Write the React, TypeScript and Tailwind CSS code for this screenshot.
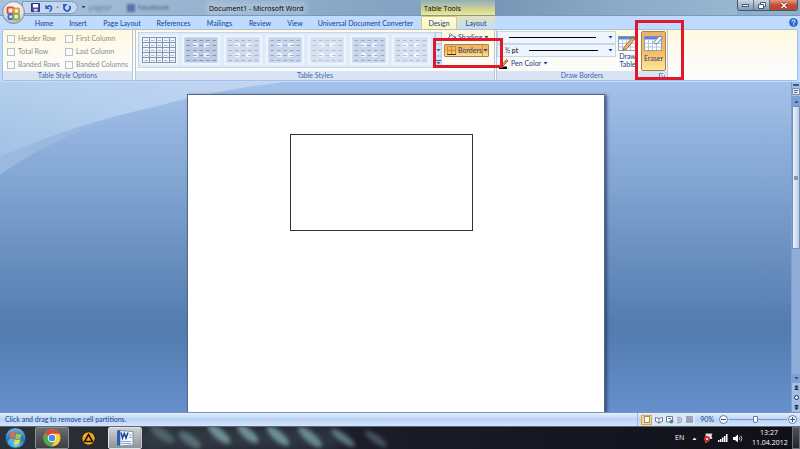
import { useState } from 'react';
import type { ReactNode } from 'react';

const TABS = [
    { name: 'Home', width: 'w-[34px]' },
    { name: 'Insert', width: 'w-[34px]' },
    { name: 'Page Layout', width: 'w-[54px]' },
    { name: 'References', width: 'w-[49px]' },
    { name: 'Mailings', width: 'w-[43px]' },
    { name: 'Review', width: 'w-[38px]' },
    { name: 'View', width: 'w-[32px]' },
    { name: 'Universal Document Converter', width: 'w-[109px]' },
];

const STYLE_OPTIONS = [
    'Header Row', 'First Column',
    'Total Row', 'Last Column',
    'Banded Rows', 'Banded Columns',
];

const THUMBS = [
    { name: 'Table Grid', line: '#8093b0', fill: '#f0f5fb', grid: true },
    { name: 'Light Shading', line: '#8091b0', fill: '#bccae3', grid: false },
    { name: 'Light List', line: '#a2b1ca', fill: '#d0dcee', grid: false },
    { name: 'Light Grid', line: '#94a5c1', fill: '#c8d5ea', grid: false },
    { name: 'Medium Shading', line: '#b0bed4', fill: '#d5e0f0', grid: false },
    { name: 'Medium List', line: '#94a5c1', fill: '#c8d5ea', grid: false },
    { name: 'Medium Grid', line: '#a9b8d0', fill: '#d5e0f0', grid: false },
];

function Caret({ up = false, className = '' }: { up?: boolean; className?: string }) {
    return (
        <svg width="5" height="3" viewBox="0 0 5 3" className={`shrink-0 ${className}`} aria-hidden="true">
            <path d={up ? 'M0.5 3L2.5 0.5L4.5 3z' : 'M0.5 0L2.5 2.5L4.5 0z'} fill="currentColor" />
        </svg>
    );
}

function OfficeButton() {
    return (
        <button aria-label="Office Button" className="absolute left-[2px] top-[1px] z-10 size-[23px]">
            <svg width="23" height="23" viewBox="0 0 23 23">
                <defs>
                    <radialGradient id="orb" cx="50%" cy="35%" r="65%">
                        <stop offset="0" stopColor="#ffffff" />
                        <stop offset="0.6" stopColor="#e3e7ef" />
                        <stop offset="1" stopColor="#a9b4c6" />
                    </radialGradient>
                </defs>
                <circle cx="11.5" cy="11.5" r="11" fill="url(#orb)" stroke="#6d7f99" strokeWidth="0.8" />
                <g fill="none" strokeWidth="2">
                    <rect x="5.5" y="6.5" width="6" height="6" rx="1" stroke="#d9532c" />
                    <rect x="12" y="7.5" width="5" height="5" rx="1" stroke="#f09a2a" />
                    <rect x="6.5" y="13.5" width="4.5" height="4.5" rx="1" stroke="#3f74c4" />
                    <rect x="11.5" y="13" width="5.5" height="5.5" rx="1" stroke="#8db33a" />
                </g>
            </svg>
        </button>
    );
}

function QuickAccess() {
    return (
        <div className="ml-[22px] mt-[1px] flex h-[13px] w-[56px] items-center gap-[3px] rounded-r-full border border-[#7d9cbf] bg-[#c5d7ec] pl-[8px]">
            <button aria-label="Save">
                <svg width="9" height="9" viewBox="0 0 9 9">
                    <path d="M0.5 0.5h8v8h-8z" fill="#4a4fae" stroke="#2f3385" />
                    <path d="M2 1h5v3.5H2z" fill="#fff" />
                    <path d="M3 6h3.5v2.5H3z" fill="#cfd5ee" />
                </svg>
            </button>
            <button aria-label="Undo" className="ml-[2px] flex items-center gap-[2px] text-[#4d6487]">
                <svg width="8" height="8" viewBox="0 0 8 8" fill="none" stroke="#2d5cc4" strokeWidth="1.7">
                    <path d="M2 3.2C4 1 7 1.8 6.5 4.5C6.3 6 5.5 6.8 4.5 7.5" />
                    <path d="M0.3 0.5V5H4.8z" fill="#2d5cc4" stroke="none" />
                </svg>
                <Caret className="scale-75" />
            </button>
            <button aria-label="Repeat">
                <svg width="8" height="8" viewBox="0 0 8 8" fill="none" stroke="#2d5cc4" strokeWidth="1.7">
                    <path d="M6.2 1.8A3 3 0 1 1 1.5 2.3" />
                    <path d="M0 0H4.5L0.5 4.5z" fill="#2d5cc4" stroke="none" />
                </svg>
            </button>
        </div>
    );
}

function TitleBar() {
    return (
        <div className="flex h-[16px] items-start overflow-hidden border-b border-[#7b98b8] bg-linear-to-r from-[#a9c3dc] via-[#83a3c2] to-[#8fb0cd] font-['Open_Sans',sans-serif]">
            <div className="flex w-[209px] shrink-0 items-start">
                <QuickAccess />
                <button aria-label="Customize Quick Access Toolbar" className="mx-[3px] mt-[6px] text-[#2b4468]">
                    <Caret />
                </button>
                <span aria-hidden="true" className="mt-[3px] w-[38px] text-[7px] leading-[10px] text-[#34506e] opacity-60 blur-[1px]">pagepr</span>
                <span aria-hidden="true" className="mt-[4px] size-[8px] bg-[#3b5998] opacity-70 blur-[1px]" />
                <span aria-hidden="true" className="ml-[3px] mt-[3px] text-[7px] leading-[10px] text-[#243b5a] opacity-80 blur-[1px]">Facebook</span>
            </div>
            <h1 className="w-[212px] shrink-0 whitespace-nowrap text-[7px] leading-[17px] text-black">
                <span className="bg-white/20 shadow-[0_0_5px_3px_rgba(255,255,255,0.2)]">Document1 - Microsoft Word</span>
            </h1>
            <div className="h-full w-[74px] shrink-0 bg-linear-to-b from-[#a8b9a8]/40 to-[#f3ea7e] pl-[3px] text-[7px] leading-[17px] text-black">Table Tools</div>
            <div className="h-full min-w-0 flex-1 bg-linear-to-r from-[#5f7f9e]/40 via-transparent to-white/10" />
            <div className="mr-[2px] flex h-[11px] shrink-0 overflow-hidden rounded-b-[3px] border border-t-0 border-[#41576f]">
                <button aria-label="Minimize" className="flex w-[16px] items-center justify-center border-r border-[#56708b] bg-linear-to-b from-[#c9d7e5] to-[#8199b3]">
                    <span className="h-[3px] w-[7px] border border-[#4a5868] bg-white" />
                </button>
                <button aria-label="Restore" className="flex w-[16px] items-center justify-center border-r border-[#56708b] bg-linear-to-b from-[#c9d7e5] to-[#8199b3]">
                    <svg width="8" height="7" viewBox="0 0 8 7" fill="#fff" stroke="#4a5868">
                        <path d="M2.5 0.5H7.5V4.5H2.5z" />
                        <path d="M0.5 2.5H5.5V6.5H0.5z" />
                    </svg>
                </button>
                <button aria-label="Close" className="flex w-[27px] items-center justify-center bg-linear-to-b from-[#e39a86] via-[#c94a30] to-[#b8452f]">
                    <svg width="8" height="7" viewBox="0 0 8 7">
                        <path d="M1.5 1L6.5 6M6.5 1L1.5 6" stroke="#5b2a22" strokeWidth="2.6" />
                        <path d="M1.5 1L6.5 6M6.5 1L1.5 6" stroke="#fff" strokeWidth="1.5" />
                    </svg>
                </button>
            </div>
        </div>
    );
}

function TabStrip() {
    return (
        <nav className="flex h-[13px] items-stretch bg-[#bfdbff] pl-[27px] text-[7px] leading-[14px] text-[#15428b]">
            {TABS.map((tab) => (
                <button key={tab.name} className={`shrink-0 whitespace-nowrap text-center ${tab.width}`}>{tab.name}</button>
            ))}
            <div className="ml-[1px] flex w-[74px] shrink-0 bg-[#dfe8d0]">
                <button className="w-[36px] rounded-t-[2px] border border-b-0 border-[#d5c98a] bg-linear-to-b from-[#fffce0] to-[#fdf6b8] leading-[13px]">Design</button>
                <button className="w-[38px] bg-linear-to-b from-[#e0e4bd] to-[#c5dcf3]">Layout</button>
            </div>
            <button aria-label="Help" className="ml-auto mr-[2px] self-center">
                <svg width="9" height="9" viewBox="0 0 9 9">
                    <circle cx="4.5" cy="4.5" r="4" fill="#2f6fd0" stroke="#1d4c9c" strokeWidth="0.6" />
                    <path d="M3 3.5Q3 2 4.5 2T6 3.4Q6 4.2 4.6 4.8V5.6M4.6 6.4V7.3" stroke="#fff" fill="none" />
                </svg>
            </button>
        </nav>
    );
}

function Group({ title, className, corner, children }: { title: string; className: string; corner?: ReactNode; children: ReactNode }) {
    return (
        <section className={`flex shrink-0 flex-col border-r border-[#b5c7df] ${className}`}>
            <div className="min-h-0 flex-1">{children}</div>
            <h2 className="relative h-[9px] bg-[#d8e3f3] text-center text-[7px] leading-[9px] text-[#3e6aaa]">
                {title}
                {corner}
            </h2>
        </section>
    );
}

function Thumb({ line, fill, grid }: { line: string; fill: string; grid: boolean }) {
    const rows = [3, 8, 13, 18, 23];
    return (
        <svg width="34" height="26" viewBox="0 0 34 26">
            <rect x="0.5" y="0.5" width="33" height="25" fill={fill} stroke={grid ? line : 'none'} />
            {!grid && (
                <path d="M9 6h5v4H9zM20 6h5v4h-5zM9 16h5v4H9zM20 16h5v4h-5z" fill="#fff" opacity="0.7" />
            )}
            {grid && <path d="M7.5 0V26M14.5 0V26M20.5 0V26M27.5 0V26M0 5.5H34M0 10.5H34M0 15.5H34M0 20.5H34" stroke={line} />}
            {rows.map((y) => (
                <path key={y} d={`M2.5 ${y + 0.5}H32`} stroke={line} strokeDasharray="3.5 3" opacity={grid ? 0.6 : 0.9} />
            ))}
        </svg>
    );
}

function Callout({ className }: { className: string }) {
    return <div className={`pointer-events-none absolute z-20 border-[3px] border-[#e0182c] ${className}`} />;
}

function TableSheet({ children }: { children?: ReactNode }) {
    return (
        <svg width="19" height="17" viewBox="0 0 19 17" className="shrink-0" aria-hidden="true">
            <rect x="0.5" y="1.5" width="17" height="14" fill="#fff" stroke="#8ba3c9" />
            <rect x="0.5" y="1.5" width="17" height="3" fill="#5b86cf" />
            <path d="M4.5 4V15M8.5 4V15M12.5 4V15M1 8.5H17M1 12H17" stroke="#b4c5e2" />
            {children}
        </svg>
    );
}

function Ribbon() {
    const [eraser, setEraser] = useState(true);

    return (
        <div className="mx-[2px] flex h-[52px] rounded-[2px] border border-[#a9c0dc] bg-linear-to-b from-[#fff9dc] via-[#fcfbf3] to-[#fbfcfd]">
            <Group title="Table Style Options" className="w-[130px]">
                <div className="grid grid-cols-[58px_1fr] grid-rows-[13px_13px_13px] pl-[4px] pt-[2px]">
                    {STYLE_OPTIONS.map((name) => (
                        <label key={name} className="flex items-center gap-[3px] whitespace-nowrap text-[7px] leading-[13px] text-[#8d8d8d]">
                            <input type="checkbox" disabled className="size-[8px] shrink-0 appearance-none border border-[#b9bfc6] bg-[#fbfbf7]" />
                            {name}
                        </label>
                    ))}
                </div>
            </Group>

            <Group title="Table Styles" className="ml-[2px] w-[360px] border-l">
                <div className="flex h-full">
                    <div className="ml-[2px] mt-[2px] flex h-[36px] w-[297px] items-center gap-[8px] overflow-hidden border border-[#c3d7ee] bg-[#dfebf8] pl-[3px]">
                        {THUMBS.map((t) => (
                            <button key={t.name} aria-label={t.name} className="shrink-0 outline-2 outline-[#edf4fb]">
                                <Thumb line={t.line} fill={t.fill} grid={t.grid} />
                            </button>
                        ))}
                    </div>
                    <div className="mt-[2px] flex h-[36px] w-[7px] flex-col text-[#3f6194]">
                        <button aria-label="Scroll up" className="flex flex-1 items-center justify-center border border-[#b8cfea] bg-[#e3edf9] text-[#9eb3d0]"><Caret up /></button>
                        <button aria-label="Scroll down" className="flex flex-1 items-center justify-center border border-[#b8cfea] bg-[#d5e4f6]"><Caret /></button>
                        <button aria-label="More styles" className="flex flex-1 flex-col items-center justify-center gap-[1px] border border-[#b8cfea] bg-[#d5e4f6]">
                            <span className="h-px w-[5px] bg-[#3f6194]" />
                            <Caret />
                        </button>
                    </div>
                    <div className="relative ml-[2px] mt-[1px] flex w-[45px] flex-col text-[7px] leading-[13px] text-[#15428b]">
                        <button className="flex h-[13px] items-center gap-[2px] pl-[3px]">
                            <svg width="9" height="9" viewBox="0 0 9 9" className="shrink-0">
                                <path d="M1.5 4.5L5 1.5L8 5L4.5 8z" fill="#e9eef7" stroke="#5b6d8c" />
                                <path d="M7.5 3.5Q9 5.5 8.5 8" stroke="#2f5fc0" strokeWidth="1.4" fill="none" />
                                <path d="M2.5 4V1Q3.5 0 4.5 1.5" stroke="#5b6d8c" fill="none" strokeWidth="0.7" />
                            </svg>
                            Shading
                            <Caret />
                        </button>
                        <button className="flex h-[13px] items-center rounded-[1px] border border-[#a08556] bg-linear-to-b from-[#f3b468] via-[#f9b650] to-[#fde08f] pl-[2px] leading-[11px]">
                            <svg width="9" height="9" viewBox="0 0 9 9" className="mr-[2px] shrink-0">
                                <path d="M0.5 0.5H8.5V8.5H0.5zM4.5 0.5V8.5M0.5 4.5H8.5" fill="none" stroke="#c07f3c" strokeWidth="0.8" />
                                <path d="M0 8.5H9" stroke="#3d2a16" />
                            </svg>
                            Borders
                            <span className="ml-auto flex h-full w-[8px] items-center justify-center border-l border-[#c79243]"><Caret /></span>
                        </button>
                        <Callout className="-left-[11px] top-[7px] h-[30px] w-[70px]" />
                    </div>
                </div>
            </Group>

            <Group
                title="Draw Borders"
                className="ml-[1px] w-[172px] border-l"
                corner={
                    <button aria-label="Borders and Shading dialog" className="absolute right-[2px] top-[2px]">
                        <svg width="6" height="6" viewBox="0 0 6 6" fill="none" stroke="#6a86b3">
                            <path d="M0.5 4V0.5H4M2.5 2.5L5 5M5.5 2.5V5.5H2.5" />
                        </svg>
                    </button>
                }
            >
                <div className="flex h-full text-[7px] text-[#15428b]">
                    <div className="flex w-[119px] flex-col pt-[1px]">
                        <div className="relative flex h-[13px] items-center border border-[#c3d7ee] bg-[#eef5fc] pl-[11px] pr-[2px]">
                            <span className="mr-[12px] h-px flex-1 bg-black" />
                            <Caret />
                            <select aria-label="Line Style" className="absolute inset-0 w-full appearance-none bg-transparent">
                                <option value="single" aria-label="Single line" />
                            </select>
                        </div>
                        <div className="flex h-[13px] items-center border border-[#c3d7ee] bg-[#eef5fc] pl-[7px] pr-[2px]">
                            <select aria-label="Line Weight" className="w-[24px] appearance-none bg-transparent text-[7px] leading-[11px] text-black">
                                <option>½ pt</option>
                            </select>
                            <span className="mr-[10px] h-px flex-1 bg-black" />
                            <Caret />
                        </div>
                        <button className="flex h-[13px] items-center gap-[2px] pl-[2px] leading-[13px]">
                            <svg width="10" height="10" viewBox="0 0 10 10" className="shrink-0">
                                <path d="M2 6.5L7.5 0.5L9 2L4 7z" fill="#e2a24a" stroke="#6b4a25" strokeWidth="0.7" />
                                <path d="M0 7.5H8V10H0z" fill="#000" />
                            </svg>
                            Pen Color
                            <Caret />
                        </button>
                    </div>
                    <button className="ml-[1px] mt-[1px] flex w-[21px] flex-col items-center pt-[4px] leading-[8px]">
                        <TableSheet>
                            <path d="M6 12.5L14 2.5L16.5 4.5L8.5 14L5 15.5z" fill="#f0b955" stroke="#7a5a2a" strokeWidth="0.8" />
                        </TableSheet>
                        Draw Table
                    </button>
                    <div className="relative ml-[3px] mt-[1px] h-[40px] w-[25px]">
                        <button
                            aria-pressed={eraser}
                            onClick={() => setEraser(!eraser)}
                            className={`flex h-full w-full flex-col items-center rounded-[2px] border pt-[3px] leading-[10px] ${
                                eraser ? 'border-[#a08556] bg-linear-to-b from-[#eeb072] via-[#fbb954] to-[#fee79a]' : 'border-transparent'
                            }`}
                        >
                            <TableSheet>
                                <path d="M10 7L14.5 1.8Q17.5 0 18.3 3L13.5 8.5Q10 9.8 10 7z" fill="#f3f6fb" stroke="#54719f" strokeWidth="0.9" />
                            </TableSheet>
                            <span className="mt-[1px]">Eraser</span>
                        </button>
                        <Callout className="-left-[6px] -top-[11px] h-[60px] w-[49px]" />
                    </div>
                </div>
            </Group>
        </div>
    );
}

function ScrollColumn() {
    return (
        <div className="relative flex w-[9px] shrink-0 flex-col items-center border-l border-[#7f9fce] bg-[#a3bfe6] text-[#2f4d7d]">
            <span className="mt-[2px] h-[2px] w-[6px] bg-[#3c5a8c]" />
            <button aria-label="View Ruler" className="my-[1px]">
                <svg width="8" height="8" viewBox="0 0 8 8">
                    <path d="M0.5 1.5H7.5V7.5H0.5z" fill="#dfe7f3" stroke="#8291aa" />
                    <path d="M2 3.5H6M2 5.5H5" stroke="#5a6c88" />
                </svg>
            </button>
            <button aria-label="Scroll up" className="flex h-[10px] w-full items-center justify-center bg-[#7ba0d4]"><Caret up /></button>
            <div className="w-full flex-1 bg-[#8fadd8]">
                <div className="flex h-[143px] flex-col items-center justify-center rounded-[1px] border border-[#6f8fbe] bg-linear-to-r from-[#f2f6fb] to-[#b7cbe4]">
                    <span className="size-[4px] bg-[#8795aa]" />
                </div>
            </div>
            <button aria-label="Scroll down" className="flex h-[9px] w-full items-center justify-center bg-[#7ba0d4]"><Caret /></button>
            <button aria-label="Previous page" className="flex h-[9px] items-center text-[#1e2f4d]"><svg width="5" height="5" viewBox="0 0 5 5"><path d="M0 2.5L2.5 0L5 2.5zM0 5L2.5 2.5L5 5z" fill="currentColor" /></svg></button>
            <button aria-label="Browse object" className="flex h-[10px] items-center"><span className="size-[5px] rounded-full border border-[#1e2f4d] bg-[#e6edf7]" /></button>
            <button aria-label="Next page" className="flex h-[10px] items-center text-[#1e2f4d]"><svg width="5" height="5" viewBox="0 0 5 5"><path d="M0 0L2.5 2.5L5 0zM0 2.5L2.5 5L5 2.5z" fill="currentColor" /></svg></button>
        </div>
    );
}

function Workspace() {
    return (
        <main className="flex min-h-[330px] flex-1">
            <div className="relative flex flex-1 justify-center overflow-hidden bg-linear-to-b from-[#a4c2eb] via-[#527bae] via-75% to-[#6690cd] pt-[12px]">
                <svg className="absolute left-0 top-0" width="300" height="100" viewBox="0 0 300 100" aria-hidden="true">
                    <defs>
                        <linearGradient id="sweep" x1="0" y1="1" x2="1" y2="0">
                            <stop offset="0" stopColor="#a2c0e6" />
                            <stop offset="0.5" stopColor="#b3cfec" />
                            <stop offset="1" stopColor="#c3d6f4" />
                        </linearGradient>
                    </defs>
                    <path d="M0 93Q55 52 150 26Q215 8 285 0H0z" fill="#9bb9e0" />
                    <path d="M0 75Q75 42 150 26Q215 8 285 0H0z" fill="url(#sweep)" />
                </svg>
                <article className="relative w-[418px] border border-b-0 border-[#53688a] bg-white pl-[102px] pt-[39px] shadow-[2px_1px_3px_rgba(30,50,90,0.7)]">
                    <table className="border-collapse">
                        <tbody>
                            <tr>
                                <td className="h-[96px] w-[182px] border border-[#333333]" />
                            </tr>
                        </tbody>
                    </table>
                </article>
            </div>
            <ScrollColumn />
        </main>
    );
}

function StatusBar() {
    return (
        <div className="flex h-[14px] items-center border-t border-[#7c93b2] bg-linear-to-b from-[#e4effd] via-[#b9d3f5] to-[#d5e5fb] pl-[5px] text-[7px] leading-[13px] text-[#15428b]">
            <span>Click and drag to remove cell partitions.</span>
            <div className="ml-auto flex h-full items-center border-l border-[#9db8dc] pl-[3px]">
                <div className="flex h-[10px] w-[54px] items-center justify-between bg-[#dbe8fa] pr-[2px]">
                    <button aria-label="Print Layout" className="flex h-[10px] w-[11px] items-center justify-center border border-[#d9a64a] bg-[#fbd48a]">
                        <span className="h-[7px] w-[6px] border border-[#a08f68] bg-white" />
                    </button>
                    <button aria-label="Full Screen Reading">
                        <svg width="8" height="8" viewBox="0 0 8 8"><path d="M0.5 1.5L4 2.5L7.5 1.5V5.5L4 6.5L0.5 5.5zM4 2.5V8" fill="#fff" stroke="#6b7c98" /></svg>
                    </button>
                    <button aria-label="Web Layout">
                        <svg width="8" height="8" viewBox="0 0 8 8"><path d="M0.5 0.5H6.5V6H0.5zM2 2.5H5" fill="#fff" stroke="#6b7c98" /><circle cx="5.5" cy="5.5" r="2" fill="#3d9a78" /></svg>
                    </button>
                    <button aria-label="Outline">
                        <svg width="7" height="8" viewBox="0 0 7 8"><path d="M1 1.5Q5.5 1 5.5 4T1 6.5M1 4H4" fill="none" stroke="#9aa9c1" strokeWidth="1.4" /></svg>
                    </button>
                    <button aria-label="Draft" className="h-[7px] w-[7px] bg-[#98a5b8]" />
                </div>
                <button className="w-[24px] text-center">90%</button>
                <button aria-label="Zoom out" className="flex size-[9px] shrink-0 items-center justify-center rounded-full border border-[#5f7ba3] bg-[#f4f8fe]"><span className="h-px w-[5px] bg-[#33517e]" /></button>
                <input
                    type="range"
                    aria-label="Zoom"
                    min="10"
                    max="190"
                    defaultValue="90"
                    className="mx-[1px] h-[11px] w-[58px] appearance-none bg-[linear-gradient(#7d97bf,#7d97bf)] bg-[length:100%_1px] bg-center bg-no-repeat [&::-webkit-slider-thumb]:h-[7px] [&::-webkit-slider-thumb]:w-[5px] [&::-webkit-slider-thumb]:appearance-none [&::-webkit-slider-thumb]:rounded-b-[2px] [&::-webkit-slider-thumb]:border [&::-webkit-slider-thumb]:border-[#5f7ba3] [&::-webkit-slider-thumb]:bg-white"
                />
                <button aria-label="Zoom in" className="flex size-[9px] shrink-0 items-center justify-center rounded-full border border-[#5f7ba3] bg-[#f4f8fe]">
                    <svg width="5" height="5" viewBox="0 0 5 5" stroke="#33517e"><path d="M0 2.5H5M2.5 0V5" /></svg>
                </button>
                <span className="w-[3px]" />
            </div>
        </div>
    );
}

function Taskbar() {
    return (
        <footer className="relative flex h-[23px] items-center overflow-hidden border-t border-[#5b6672] bg-linear-to-r from-[#2c3138] via-[#1b1b28] to-[#101018] font-['Open_Sans',sans-serif] text-white">
            <svg className="absolute left-[140px] top-0" width="270" height="23" viewBox="0 0 270 23" aria-hidden="true">
                <rect width="200" height="23" fill="#4a5f68" opacity="0.35" className="blur-[6px]" />
                <g fill="#7fa6ac" className="blur-[2px]">
                    <ellipse cx="22" cy="7" rx="14" ry="5" opacity="0.4" transform="rotate(35 22 7)" />
                    <ellipse cx="50" cy="13" rx="13" ry="5" opacity="0.5" transform="rotate(35 50 13)" />
                    <ellipse cx="79" cy="7" rx="14" ry="5" opacity="0.8" transform="rotate(40 79 7)" />
                    <ellipse cx="108" cy="7" rx="13" ry="5" opacity="0.8" transform="rotate(40 108 7)" />
                    <ellipse cx="138" cy="9" rx="14" ry="5" opacity="0.8" transform="rotate(40 138 9)" />
                    <ellipse cx="170" cy="10" rx="15" ry="5" opacity="0.75" transform="rotate(40 170 10)" />
                    <ellipse cx="203" cy="11" rx="14" ry="4" opacity="0.65" transform="rotate(35 203 11)" />
                    <ellipse cx="236" cy="12" rx="13" ry="4" opacity="0.4" transform="rotate(35 236 12)" />
                </g>
            </svg>
            <button aria-label="Start" className="ml-[4px] shrink-0">
                <svg width="23" height="22" viewBox="0 0 23 22">
                    <defs>
                        <radialGradient id="start" cx="50%" cy="85%" r="85%">
                            <stop offset="0" stopColor="#63d3f0" />
                            <stop offset="0.55" stopColor="#2272ae" />
                            <stop offset="1" stopColor="#8db8d6" />
                        </radialGradient>
                    </defs>
                    <circle cx="11.5" cy="11" r="10.3" fill="url(#start)" stroke="#1c3c5c" />
                    <path d="M6.5 6.5Q9 4.5 11.5 6L10.3 11Q8 9.5 5.3 11z" fill="#ee6a35" />
                    <path d="M12.2 6.3Q14.7 8 17.7 6.5L16.5 11.3Q13.5 12.5 11 11.3z" fill="#93cc4c" />
                    <path d="M5 12Q7.8 10.5 10 12L8.8 16.8Q6.5 15.5 3.9 16.8z" fill="#4fb2ee" />
                    <path d="M10.8 12.3Q13.3 13.5 16.2 12.3L15 17Q12.3 18.3 9.6 17z" fill="#fbd24b" />
                </svg>
            </button>
            <button aria-label="Google Chrome" className="ml-[8px] flex h-[22px] w-[34px] shrink-0 items-center justify-center rounded-[2px] border border-[#8a8f94] bg-linear-to-b from-[#6a6c70] to-[#3d3f44]">
                <svg width="18" height="18" viewBox="0 0 18 18">
                    <circle cx="9" cy="9" r="8.5" fill="#fbd02f" />
                    <path d="M9 9L1.6 4.8A8.5 8.5 0 0 0 8.5 17.5L12.5 11z" fill="#4aa84f" />
                    <path d="M9 9L1.6 4.8A8.5 8.5 0 0 1 16.4 4.8H9z" fill="#e04434" />
                    <circle cx="9" cy="9" r="4.3" fill="#fff" />
                    <circle cx="9" cy="9" r="3.3" fill="#4a8be0" />
                </svg>
            </button>
            <button aria-label="AIMP" className="ml-[12px] shrink-0">
                <svg width="15" height="15" viewBox="0 0 15 15">
                    <circle cx="7.5" cy="7.5" r="6.7" fill="#f5a623" stroke="#2a1c08" />
                    <path d="M7.5 3.5L11.5 10.5H3.5z" fill="none" stroke="#1d1405" strokeWidth="1.6" />
                </svg>
            </button>
            <button aria-label="Document1 - Microsoft Word" className="ml-[12px] flex h-[22px] w-[34px] shrink-0 items-center justify-center rounded-[2px] border border-[#e2e4e6] bg-linear-to-b from-[#cfd1d3] to-[#8f9498]">
                <svg width="18" height="18" viewBox="0 0 18 18">
                    <path d="M4 1.5L17 2.5V16L4 17z" fill="#f6f9fd" stroke="#7d93b8" />
                    <path d="M13 6H16M13 8.5H16M5 12.5H15M5 14.5H15" stroke="#8ba6d2" />
                    <path d="M1 1.5L4 1V17L1 16z" fill="#2f5fae" />
                    <path d="M5 3.5L6.5 9L8.3 4.5L10 9L12 3.5" fill="none" stroke="#234a97" strokeWidth="1.6" />
                </svg>
            </button>
            <div className="relative ml-auto flex items-center">
                <span className="w-[17px] text-[7px]">EN</span>
                <button aria-label="Show hidden icons" className="mr-[6px]"><Caret up /></button>
                <svg width="10" height="10" viewBox="0 0 10 10" className="mr-[5px]" aria-hidden="true">
                    <path d="M3 0.5V10M3 1H9L8 3L9 5.5H3" fill="#e8eaec" stroke="#c9ccd0" />
                    <circle cx="4" cy="6" r="3" fill="#d42a26" />
                    <path d="M3 5L5 7M5 5L3 7" stroke="#fff" strokeWidth="0.8" />
                </svg>
                <svg width="10" height="8" viewBox="0 0 10 8" fill="#fff" className="mr-[5px]" aria-hidden="true">
                    <path d="M0 6h1.5v2H0zM2 5h1.5v3H2zM4 3.5h1.5v4.5H4zM6 2h1.5v6H6zM8 0h1.5v8H8z" />
                </svg>
                <svg width="10" height="9" viewBox="0 0 10 9" className="mr-[9px]" aria-hidden="true">
                    <path d="M0 3H2L5 0.5V8.5L2 6H0z" fill="#fff" />
                    <path d="M6.3 3Q7.3 4.5 6.3 6M7.8 1.5Q9.8 4.5 7.8 7.5" stroke="#c9ccd0" fill="none" strokeWidth="0.9" />
                </svg>
                <button className="mr-[6px] w-[34px] text-center text-[7px] leading-[10px]">13:27<br />11.04.2012</button>
                <button aria-label="Show desktop" className="h-[22px] w-[8px] border border-[#6a7076] bg-linear-to-b from-[#4c5056] to-[#24262b]" />
            </div>
        </footer>
    );
}

export default function App() {
    return (
        <div className="flex min-h-screen flex-col overflow-x-hidden bg-[#bfdbff] font-[Lato,'Open_Sans',sans-serif]">
            <header className="relative pb-px">
                <OfficeButton />
                <TitleBar />
                <TabStrip />
                <Ribbon />
            </header>
            <Workspace />
            <StatusBar />
            <Taskbar />
        </div>
    );
}
